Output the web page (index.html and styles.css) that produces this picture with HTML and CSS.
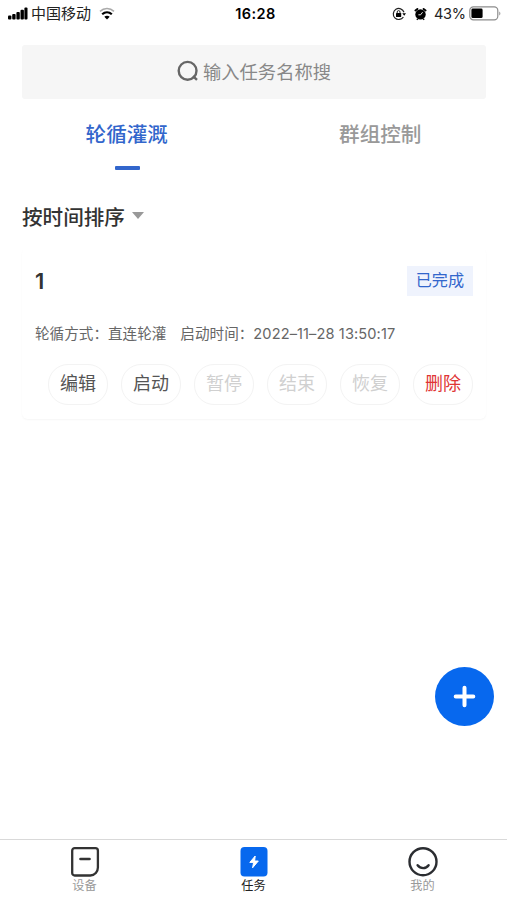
FILE: index.html
```html
<!DOCTYPE html>
<html lang="zh-CN">
<head>
  <meta charset="UTF-8">
  <meta name="viewport" content="width=device-width, initial-scale=1.0">
  <title>任务</title>
  <link rel="stylesheet" href="styles.css">
</head>
<body>

  <!-- Status bar -->
  <header class="status-bar">
    <div class="status-left">
      <svg class="signal" width="20" height="13" viewBox="0 0 20 13">
        <rect x="0" y="8.5" width="3.4" height="4" rx="1"/>
        <rect x="4.2" y="7" width="3.4" height="5.5" rx="1"/>
        <rect x="8.4" y="5" width="3.4" height="7.5" rx="1"/>
        <rect x="12.5" y="2.7" width="3.4" height="9.8" rx="1"/>
        <rect x="16.4" y="0.5" width="3.1" height="12" rx="1"/>
      </svg>
      <span class="carrier">中国移动</span>
      <svg class="wifi" width="16" height="13" viewBox="0 0 16 13">
        <path d="M1 4.4C5 .6 11 .6 15 4.4" fill="none" stroke="#aaa" stroke-width="1.5"/>
        <path d="M3.2 7.2c2.8-2.6 6.8-2.6 9.6 0" fill="none" stroke="#000" stroke-width="2.2"/>
        <path d="M8 12.4L5.3 9.7c1.5-1.3 3.9-1.3 5.4 0z"/>
      </svg>
    </div>
    <span class="time">16:28</span>
    <div class="status-right">
      <svg class="lock" width="14" height="14" viewBox="0 0 14 14">
        <path d="M11.4 10A5.5 5.5 0 1 1 12 5.200" fill="none" stroke="#222" stroke-width="1.2"/>
        <path d="M10.3 6.2h3.7l-1.8 2.6z"/>
        <rect x="4" y="6" width="5.2" height="4" rx=".6"/>
        <path d="M5.2 6.2V5a1.4 1.4 0 0 1 2.8 0v1.2" fill="none" stroke="#222" stroke-width="1"/>
      </svg>
      <svg class="alarm" width="13" height="14" viewBox="0 0 13 14">
        <circle cx="6.5" cy="7.400" r="5.200"/>
        <path d="M1.400 3.400L3.400 1.900M11.600 3.400L9.600 1.900" stroke="#000" stroke-width="1.900" stroke-linecap="round"/>
        <path d="M2.800 12.800l1-1M10.200 12.800l-1-1" stroke="#000" stroke-width="1.300"/>
        <path d="M8.600 5.200L6.600 7.800H4.400" fill="none" stroke="#fff" stroke-width=".9"/>
      </svg>
      <span class="percent">43%</span>
      <svg class="battery" width="32" height="15" viewBox="0 0 32 15">
        <rect x=".8" y=".8" width="28" height="13" rx="3.6" fill="none" stroke="#8c8c8c" stroke-width="1.2"/>
        <rect x="2.4" y="2.5" width="11.2" height="9.6" rx="1.4"/>
        <path d="M30.3 5.4v4c1.4-.6 1.4-3.4 0-4z" fill="#8c8c8c"/>
      </svg>
    </div>
  </header>

  <main class="page">
    <div class="search">
      <svg width="22" height="22" viewBox="0 0 22 22" fill="none" stroke="#666" stroke-width="2.4">
        <circle cx="10.6" cy="10.8" r="8.9"/>
        <path d="M16 16.2l4 3.6"/>
      </svg>
      <span>输入任务名称搜</span>
    </div>

    <nav class="tabs">
      <a class="tab active">轮循灌溉</a>
      <a class="tab">群组控制</a>
    </nav>

    <div class="sort">
      <span>按时间排序</span>
      <i class="caret"></i>
    </div>

    <!-- Task card -->
    <section class="card">
      <div class="card-head">
        <h2>1</h2>
        <span class="badge">已完成</span>
      </div>
      <div class="card-meta">
        <span>轮循方式：直连轮灌</span>
        <span>启动时间：<span class="date">2022–11–28 13:50:17</span></span>
      </div>
      <div class="actions">
        <button>编辑</button>
        <button>启动</button>
        <button disabled>暂停</button>
        <button disabled>结束</button>
        <button disabled>恢复</button>
        <button class="danger">删除</button>
      </div>
    </section>
  </main>

  <button class="fab" aria-label="添加">
    <svg width="23" height="23" viewBox="0 0 23 23" stroke="#fff" stroke-width="4" stroke-linecap="round">
      <path d="M11.5 2.7v17.6M2.7 11.5h17.6"/>
    </svg>
  </button>

  <!-- Bottom navigation -->
  <nav class="bottom-nav">
    <a class="nav-item">
      <svg width="30" height="30" viewBox="0 0 30 30" fill="none" stroke="#333" stroke-width="2.3">
        <path d="M4.700 1.200h20.700a2.500 2.500 0 0 1 2.500 2.500v16.900c0 4-3 7.900-7.600 7.900H4.700A2.500 2.500 0 0 1 2.200 26V3.700a2.500 2.500 0 0 1 2.500-2.500z"/>
        <path d="M10.500 12h9" stroke-width="2.600" stroke-linecap="round"/>
      </svg>
      <span>设备</span>
    </a>
    <a class="nav-item active">
      <svg width="30" height="30" viewBox="0 0 30 30">
        <rect x="1.5" y="0" width="27" height="29.5" rx="4" fill="#0768ee"/>
        <path d="M16.2 9L10.800 15.400h3.800L13.600 20.800l5.700-6.800h-3.700z" fill="#fff" stroke="#fff" stroke-width="1" stroke-linejoin="round"/>
      </svg>
      <span>任务</span>
    </a>
    <a class="nav-item">
      <svg width="30" height="30" viewBox="0 0 30 30" fill="none" stroke="#2b2d31" stroke-width="2.4">
        <circle cx="15" cy="14.7" r="13.5"/>
        <path d="M9.600 18.300c3 3.800 8.200 3.800 11 0" stroke-linecap="round"/>
      </svg>
      <span>我的</span>
    </a>
  </nav>

</body>
</html>
```
FILE: styles.css
```css
:root {
  --primary: #3266cc;
  --text: #333;
  --muted: #999;
}

* {
  box-sizing: border-box;
}

body {
  margin: 0;
  height: 900px;
  display: flex;
  flex-direction: column;
  background: #fff;
  color: var(--text);
  font-family: Inter, "Noto Sans CJK SC", sans-serif;
  overflow: hidden;
}

svg {
  display: block;
  flex: none;
}

/* Status bar */
.status-bar {
  display: grid;
  grid-template-columns: 1fr auto 1fr;
  align-items: center;
  height: 27px;
  padding: 0 6px 0 8px;
  color: #000;
  font-size: 15px;
  line-height: 20px;
}

.status-left,
.status-right {
  display: flex;
  align-items: center;
}

.carrier {
  margin: 0 8px 0 3px;
  color: #222;
}

.time {
  padding-left: 2px;
  font-size: 14.5px;
  font-weight: 600;
  letter-spacing: 0.4px;
}

.status-right {
  justify-content: flex-end;
}

.alarm {
  margin: 0 7px 0 8px;
}

.percent {
  width: 30px;
  margin-right: 5px;
  font-size: 14.5px;
  letter-spacing: -0.3px;
  color: #222;
}

.page {
  flex: 1;
  padding: 17.5px 21px 0 22px;
}

.search {
  display: flex;
  align-items: center;
  justify-content: center;
  gap: 4px;
  height: 54px;
  padding-bottom: 2px;
  background: #f6f6f6;
  border-radius: 3px;
  color: #888;
  font-size: 18.3px;
}

/* Tabs */
.tabs {
  display: flex;
  margin: 18px -21px 0 -22px;
}

.tab {
  flex: 1;
  display: flex;
  flex-direction: column;
  align-items: center;
  height: 72px;
  font-size: 20.6px;
  font-weight: 500;
  line-height: 36px;
  color: var(--muted);
}

.tab.active {
  color: var(--primary);
}

.tab.active::after {
  content: "";
  width: 25px;
  height: 4px;
  margin: 13px 0 0 1px;
  background: var(--primary);
  border-radius: 1px;
}

.sort {
  display: flex;
  align-items: center;
  gap: 7px;
  height: 56px;
  margin-top: 3px;
  padding-bottom: 8px;
  font-size: 20.6px;
  font-weight: 500;
}

.caret {
  border: 6.5px solid transparent;
  border-top: 7px solid #999;
  border-bottom: 0;
}

/* Card */
.card {
  height: 171px;
  padding: 18px 13px 0;
  border-radius: 6px;
  box-shadow: 0 1px 2px rgba(0, 0, 0, 0.04);
}

.card-head {
  display: flex;
  align-items: center;
  justify-content: space-between;
  height: 30px;
}

.card-head h2 {
  margin: 0;
  font-size: 22px;
  font-weight: 600;
}

.badge {
  padding: 0 9px;
  height: 30px;
  line-height: 29px;
  background: #eff3fd;
  color: var(--primary);
  font-size: 16.1px;
}

.card-meta {
  display: flex;
  gap: 14px;
  margin-top: 27px;
  font-size: 14.6px;
  line-height: 22px;
  color: #666;
  white-space: nowrap;
}

.date {
  letter-spacing: 0.1px;
}

.actions {
  display: flex;
  justify-content: flex-end;
  gap: 13px;
  margin-top: 19px;
}

.actions button {
  width: 60px;
  height: 41px;
  padding: 0 0 4px;
  background: #fff;
  border: 1px solid #f3f3f3;
  border-radius: 20px;
  color: #555;
  font-family: inherit;
  font-size: 18px;
}

.actions button:disabled {
  color: #d0d0d0;
}

.actions .danger {
  color: #e03535;
}

/* Floating add button */
.fab {
  position: fixed;
  right: 13px;
  bottom: 174px;
  display: flex;
  align-items: center;
  justify-content: center;
  width: 59px;
  height: 59px;
  padding: 0;
  border: 0;
  border-radius: 50%;
  background: #0768ee;
}

/* Bottom navigation */
.bottom-nav {
  display: flex;
  height: 61px;
  border-top: 1px solid #d9d9d9;
}

.nav-item {
  flex: 1;
  display: flex;
  flex-direction: column;
  align-items: center;
  padding-top: 7px;
  font-size: 12.2px;
  line-height: 17px;
  color: var(--muted);
}

.nav-item.active {
  color: #222;
}
```
